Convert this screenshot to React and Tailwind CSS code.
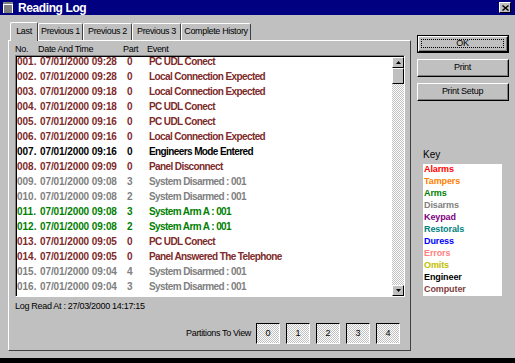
const rows = [
  ["001.", "07/01/2000 09:28", "0", "PC UDL Conect", "c"],
  ["002.", "07/01/2000 09:28", "0", "Local Connection Expected", "c"],
  ["003.", "07/01/2000 09:18", "0", "Local Connection Expected", "c"],
  ["004.", "07/01/2000 09:18", "0", "PC UDL Conect", "c"],
  ["005.", "07/01/2000 09:16", "0", "PC UDL Conect", "c"],
  ["006.", "07/01/2000 09:16", "0", "Local Connection Expected", "c"],
  ["007.", "07/01/2000 09:16", "0", "Engineers Mode Entered", "e"],
  ["008.", "07/01/2000 09:09", "0", "Panel Disconnect", "c"],
  ["009.", "07/01/2000 09:08", "3", "System Disarmed : 001", "d"],
  ["010.", "07/01/2000 09:08", "2", "System Disarmed : 001", "d"],
  ["011.", "07/01/2000 09:08", "3", "System Arm A : 001", "a"],
  ["012.", "07/01/2000 09:08", "2", "System Arm A : 001", "a"],
  ["013.", "07/01/2000 09:05", "0", "PC UDL Conect", "c"],
  ["014.", "07/01/2000 09:05", "0", "Panel Answered The Telephone", "c"],
  ["015.", "07/01/2000 09:04", "4", "System Disarmed : 001", "d"],
  ["016.", "07/01/2000 09:04", "3", "System Disarmed : 001", "d"],
];

const rowColor = {
  c: "text-[#7e2a2a]",
  e: "text-black",
  d: "text-[#808080]",
  a: "text-[#008000]",
};

const keyItems = [
  ["Alarms", "text-[#ff0000]"],
  ["Tampers", "text-[#ff8000]"],
  ["Arms", "text-[#008000]"],
  ["Disarms", "text-[#808080]"],
  ["Keypad", "text-[#800080]"],
  ["Restorals", "text-[#008080]"],
  ["Duress", "text-[#0000ff]"],
  ["Errors", "text-[#ff8080]"],
  ["Omits", "text-[#c0c000]"],
  ["Engineer", "text-black"],
  ["Computer", "text-[#804040]"],
];

const tabs = [
  ["Last", "w-[28px]"],
  ["Previous 1", "w-[45px]"],
  ["Previous 2", "w-[49px]"],
  ["Previous 3", "w-[49px]"],
  ["Complete History", "w-[70px]"],
];

const dither =
  "bg-[repeating-conic-gradient(#c0c0c0_0%_25%,#ffffff_0%_50%)] bg-[length:2px_2px]";

function Button({ label, isDefault }) {
  return (
    <div className={`h-[18px] w-[92px] ${isDefault ? "border border-black" : ""}`}>
      <div className="h-full w-full border-t border-l border-t-white border-l-white border-b border-r border-b-black border-r-black">
        <div className="h-full w-full border-b border-r border-b-[#808080] border-r-[#808080] flex items-center justify-center p-[2px]">
          <div
            className={`h-full w-full flex items-center justify-center text-[9px] tracking-[-0.3px] text-black ${
              isDefault ? "border border-dotted border-black" : ""
            }`}
          >
            {label}
          </div>
        </div>
      </div>
    </div>
  );
}

function ScrollBtn({ up }) {
  return (
    <div className="h-[11px] w-[12px] bg-[#c0c0c0] border-t border-l border-white border-b border-r border-b-black border-r-black flex items-center justify-center">
      <svg width="5" height="3" viewBox="0 0 5 3">
        {up ? <path d="M2.5 0 L5 3 L0 3 Z" fill="black" /> : <path d="M0 0 L5 0 L2.5 3 Z" fill="black" />}
      </svg>
    </div>
  );
}

export default function App() {
  return (
    <div className="w-[515px] h-[363px] bg-[#c0c0c0] flex flex-col font-['Liberation_Sans',Arial,sans-serif] overflow-hidden select-none">
      {/* title bar */}
      <div className="h-[15px] bg-[#000080] flex items-center pl-[3px] pr-[4px] shrink-0">
        <svg width="10" height="11" viewBox="0 0 10 11">
          <rect x="0" y="0" width="10" height="11" fill="white" />
          <rect x="0" y="0" width="10" height="2" fill="#808080" />
          <rect x="1" y="3.5" width="8" height="1" fill="black" />
          <rect x="1" y="5.5" width="8" height="1" fill="black" />
          <rect x="1" y="7.5" width="8" height="1" fill="black" />
          <rect x="1" y="9.5" width="8" height="1" fill="black" />
        </svg>
        <span className="ml-[5px] text-white font-bold text-[12px] tracking-[-0.4px]">Reading Log</span>
        <div className="ml-auto h-[11px] w-[12px] bg-[#c0c0c0] border-t border-l border-white border-b border-r border-b-black border-r-black flex items-center justify-center">
          <svg width="7" height="6" viewBox="0 0 7 6">
            <path d="M0.5 0.5 L6.5 5.5 M6.5 0.5 L0.5 5.5" stroke="black" strokeWidth="1.4" />
          </svg>
        </div>
      </div>

      {/* body */}
      <div className="flex-1 flex pl-[8px] pt-[6px]">
        {/* left: tabs + panel */}
        <div className="w-[403px] flex flex-col pb-[7px]">
          <div className="h-[19px] flex items-end pl-[2px] relative z-10">
            {tabs.map(([t, w], i) => (
              <div
                key={t}
                className={`${w} ${
                  i === 0 ? "h-[19px] -mb-[1px] bg-[#c0c0c0]" : "h-[17px]"
                } border-t border-l border-white border-r border-r-[#404040] rounded-t-[2px] flex items-center justify-center text-[9px] tracking-[-0.35px] text-black`}
              >
                {t}
              </div>
            ))}
          </div>
          <div className="flex-1 border-t border-l border-white border-r border-b border-r-[#404040] border-b-[#404040] flex flex-col pl-[6px] pr-[6px]">
            <div className="h-[11px] mt-[3px] flex items-center text-[9px] tracking-[-0.3px] text-black">
              <span className="w-[23px]">No.</span>
              <span className="w-[85px]">Date And Time</span>
              <span className="w-[24px]">Part</span>
              <span>Event</span>
            </div>
            {/* list */}
            <div className="h-[242px] w-[390px] border-t border-l border-t-[#808080] border-l-[#808080] border-b border-r border-b-white border-r-white">
              <div className="h-full w-full border-t border-l border-black flex bg-white">
                <div className="flex-1 overflow-hidden">
                  <div className="-mt-[3px]">
                    {rows.map(([n, d, p, e, k]) => (
                      <div key={n} className={`h-[15px] flex items-center font-bold text-[10px] ${rowColor[k]}`}>
                        <span className="w-[23px]">{n}</span>
                        <span className="w-[87px] tracking-[-0.1px]">{d}</span>
                        <span className="w-[22px]">{p}</span>
                        <span className="tracking-[-0.6px] whitespace-nowrap">{e}</span>
                      </div>
                    ))}
                  </div>
                </div>
                <div className={`w-[12px] flex flex-col ${dither}`}>
                  <ScrollBtn up />
                  <div className="h-[16px] w-[12px] bg-[#c0c0c0] border-t border-l border-white border-b border-r border-b-black border-r-black" />
                  <div className="flex-1" />
                  <ScrollBtn />
                </div>
              </div>
            </div>
            <div className="mt-[4px] h-[11px] flex items-center text-[9px] tracking-[-0.3px] text-black">
              Log Read At : 27/03/2000 14:17:15
            </div>
            <div className="mt-[11px] flex items-center justify-end pr-[4px] gap-[6px]">
              <span className="text-[9px] tracking-[-0.35px] text-black mr-[-1px]">Partitions To View</span>
              {["0", "1", "2", "3", "4"].map((p) => (
                <div
                  key={p}
                  className={`h-[21px] w-[24px] border-t border-l border-black border-b border-r border-b-white border-r-white flex items-center justify-center text-[9px] text-black ${dither}`}
                >
                  {p}
                </div>
              ))}
            </div>
          </div>
        </div>

        {/* right column */}
        <div className="ml-[6px] w-[92px] pt-[14px] flex flex-col">
          <div className="flex flex-col gap-[6px]">
            <Button label="OK" isDefault />
            <Button label="Print" />
            <Button label="Print Setup" />
          </div>
          <div className="mt-[48px] ml-[6px] h-[11px] flex items-center text-[10px] text-black">Key</div>
          <div className="mt-[4px] ml-[6px] w-[79px] h-[132px] bg-white pl-[1px]">
            {keyItems.map(([name, c]) => (
              <div key={name} className={`h-[12px] flex items-center font-bold text-[9px] tracking-[-0.1px] ${c}`}>
                {name}
              </div>
            ))}
          </div>
        </div>
      </div>

      <div className="h-[5px] bg-black shrink-0" />
    </div>
  );
}
